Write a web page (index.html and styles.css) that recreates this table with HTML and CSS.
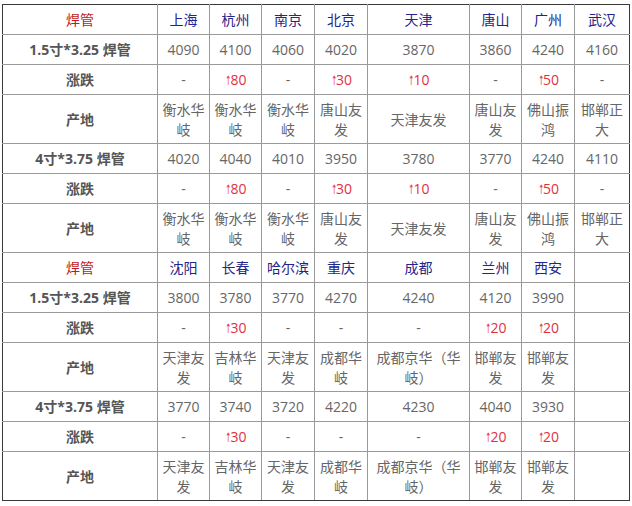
FILE: index.html
```html
<!DOCTYPE html>
<html lang="zh-CN">
<head>
<meta charset="utf-8">
<title>焊管价格</title>
<link rel="stylesheet" href="styles.css">
</head>
<body>
<table class="price">
  <colgroup>
    <col class="c-label"><col class="c-n"><col class="c-n"><col class="c-m"><col class="c-m"><col class="c-w"><col class="c-n"><col class="c-m"><col class="c-l">
  </colgroup>
  <tbody>
    <tr class="s">
      <td class="head">焊管</td>
      <td class="city">上海</td><td class="city">杭州</td><td class="city">南京</td><td class="city">北京</td><td class="city">天津</td><td class="city">唐山</td><td class="city">广州</td><td class="city">武汉</td>
    </tr>
    <tr class="s">
      <td class="label">1.5寸*3.25 焊管</td>
      <td>4090</td><td>4100</td><td>4060</td><td>4020</td><td>3870</td><td>3860</td><td>4240</td><td>4160</td>
    </tr>
    <tr class="s">
      <td class="label">涨跌</td>
      <td>-</td><td class="up"><span class="arr">↑</span>80</td><td>-</td><td class="up"><span class="arr">↑</span>30</td><td class="up"><span class="arr">↑</span>10</td><td>-</td><td class="up"><span class="arr">↑</span>50</td><td>-</td>
    </tr>
    <tr class="d">
      <td class="label">产地</td>
      <td>衡水华岐</td><td>衡水华岐</td><td>衡水华岐</td><td>唐山友发</td><td>天津友发</td><td>唐山友发</td><td>佛山振鸿</td><td>邯郸正大</td>
    </tr>
    <tr class="s">
      <td class="label">4寸*3.75 焊管</td>
      <td>4020</td><td>4040</td><td>4010</td><td>3950</td><td>3780</td><td>3770</td><td>4240</td><td>4110</td>
    </tr>
    <tr class="s">
      <td class="label">涨跌</td>
      <td>-</td><td class="up"><span class="arr">↑</span>80</td><td>-</td><td class="up"><span class="arr">↑</span>30</td><td class="up"><span class="arr">↑</span>10</td><td>-</td><td class="up"><span class="arr">↑</span>50</td><td>-</td>
    </tr>
    <tr class="d">
      <td class="label">产地</td>
      <td>衡水华岐</td><td>衡水华岐</td><td>衡水华岐</td><td>唐山友发</td><td>天津友发</td><td>唐山友发</td><td>佛山振鸿</td><td>邯郸正大</td>
    </tr>
    <tr class="s">
      <td class="head">焊管</td>
      <td class="city">沈阳</td><td class="city">长春</td><td class="city">哈尔滨</td><td class="city">重庆</td><td class="city">成都</td><td class="city">兰州</td><td class="city">西安</td><td></td>
    </tr>
    <tr class="s">
      <td class="label">1.5寸*3.25 焊管</td>
      <td>3800</td><td>3780</td><td>3770</td><td>4270</td><td>4240</td><td>4120</td><td>3990</td><td></td>
    </tr>
    <tr class="s">
      <td class="label">涨跌</td>
      <td>-</td><td class="up"><span class="arr">↑</span>30</td><td>-</td><td>-</td><td>-</td><td class="up"><span class="arr">↑</span>20</td><td class="up"><span class="arr">↑</span>20</td><td></td>
    </tr>
    <tr class="d">
      <td class="label">产地</td>
      <td>天津友发</td><td>吉林华岐</td><td>天津友发</td><td>成都华岐</td><td>成都京华（华岐）</td><td>邯郸友发</td><td>邯郸友发</td><td></td>
    </tr>
    <tr class="s">
      <td class="label">4寸*3.75 焊管</td>
      <td>3770</td><td>3740</td><td>3720</td><td>4220</td><td>4230</td><td>4040</td><td>3930</td><td></td>
    </tr>
    <tr class="s">
      <td class="label">涨跌</td>
      <td>-</td><td class="up"><span class="arr">↑</span>30</td><td>-</td><td>-</td><td>-</td><td class="up"><span class="arr">↑</span>20</td><td class="up"><span class="arr">↑</span>20</td><td></td>
    </tr>
    <tr class="d">
      <td class="label">产地</td>
      <td>天津友发</td><td>吉林华岐</td><td>天津友发</td><td>成都华岐</td><td>成都京华（华岐）</td><td>邯郸友发</td><td>邯郸友发</td><td></td>
    </tr>
  </tbody>
</table>
</body>
</html>
```
FILE: styles.css
```css
html, body {
  margin: 0;
  padding: 0;
  background: #ffffff;
}
body {
  padding: 4px 0 0 2px;
  font-family: "Open Sans", "Noto Sans CJK SC", sans-serif;
  font-size: 14px;
  color: #666666;
}
.price {
  border-collapse: collapse;
  table-layout: fixed;
  width: 628px;
  border: 1px solid #3a3a3a;
}
.c-label { width: 155px; }
.c-n { width: 52px; }
.c-m { width: 53px; }
.c-w { width: 102px; }
.c-l { width: 55px; }
.price td {
  border: 1px solid #9a9a9a;
  padding: 1px 4px 0;
  text-align: center;
  vertical-align: middle;
  line-height: 20px;
  word-break: break-all;
}
.price tr.s td { height: 28px; }
.price tr.d td { height: 47px; }
.price td.head {
  color: #c0191f;
}
.price td.city {
  color: #24248a;
}
.price td.label {
  font-weight: bold;
  color: #555555;
}
.price td.up {
  color: #e2303f;
}
.arr {
  font-family: "DejaVu Sans", sans-serif;
  font-size: 13px;
  display: inline-block;
  width: 6px;
  text-align: center;
  transform: scaleX(0.55);
  margin-right: 0;
}
.price tr:first-child td { border-top-color: #3a3a3a; }
.price tr:last-child td { border-bottom-color: #3a3a3a; }
.price td:first-child { border-left-color: #3a3a3a; }
.price td:last-child { border-right-color: #3a3a3a; }
```
